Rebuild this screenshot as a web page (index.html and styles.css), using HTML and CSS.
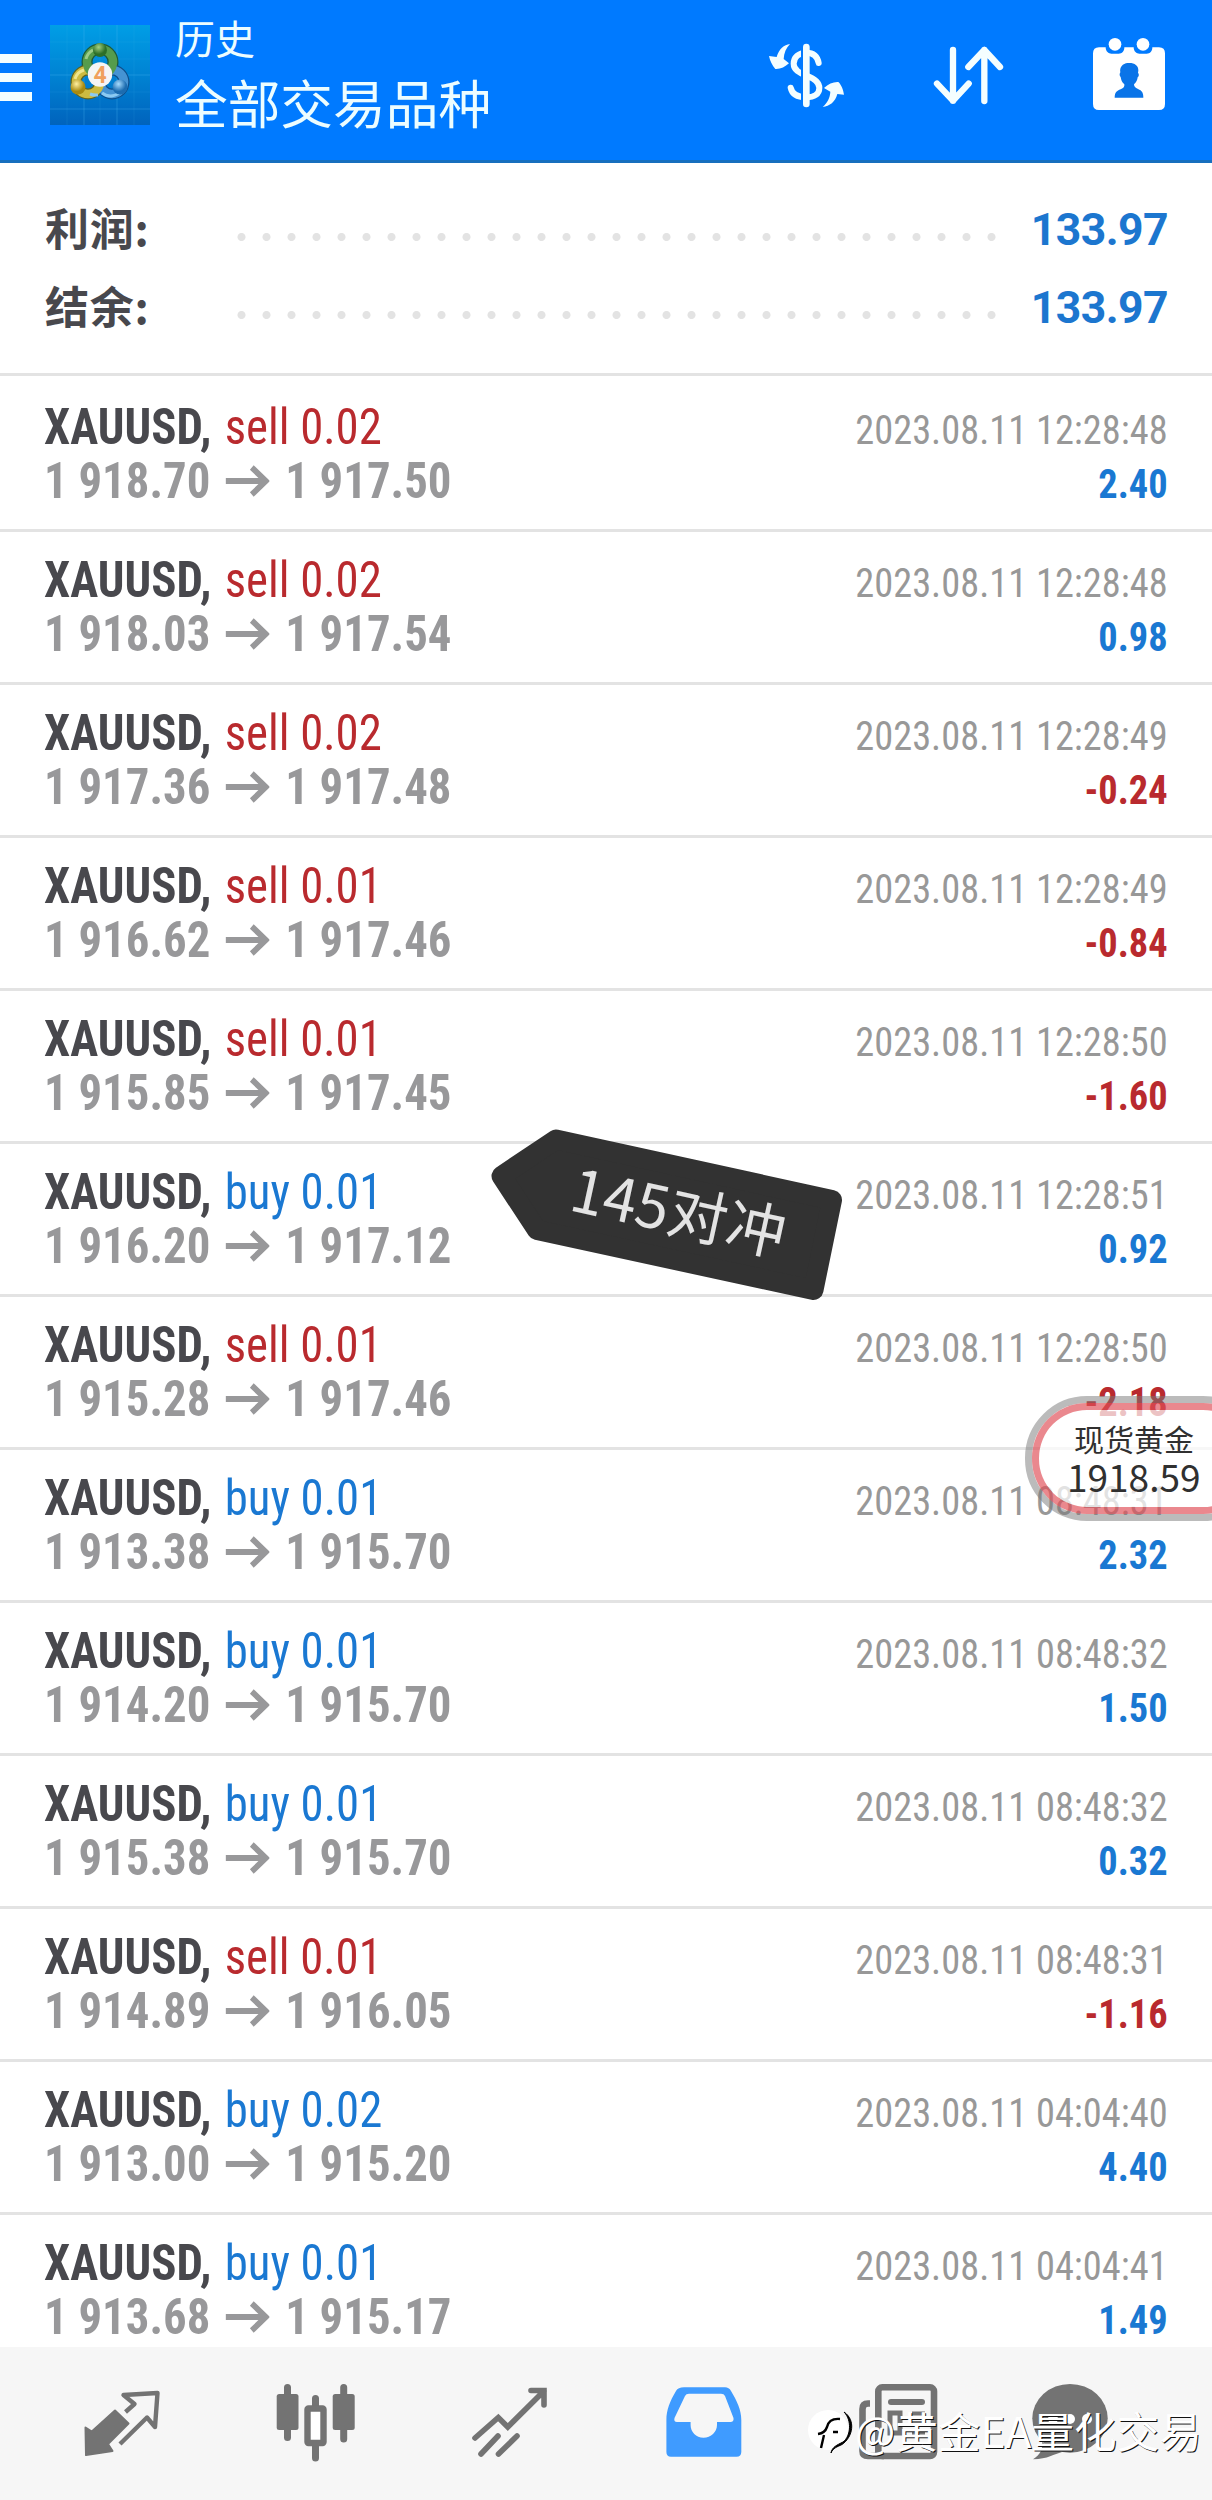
FILE: index.html
```
<!DOCTYPE html>
<html lang="zh-CN">
<head>
<meta charset="utf-8">
<title>历史</title>
<link rel="stylesheet" href="styles.css">
</head>
<body>
<svg class="defs" aria-hidden="true">
  <symbol id="arrow" viewBox="0 0 47 32"><path d="M0 16H43M28 2.5L43 16L28 29.5" fill="none" stroke="currentColor" stroke-width="6"/></symbol>
</svg>
<div class="app">
  <header class="bar">
    <div class="menu"><i></i><i></i><i></i></div>
    <svg class="logo" viewBox="0 0 100 100">
      <defs>
        <linearGradient id="bg" x1="0" y1="0" x2="0" y2="1"><stop offset="0" stop-color="#009ee6"/><stop offset=".5" stop-color="#0083d3"/><stop offset="1" stop-color="#0063bd"/></linearGradient>
        <radialGradient id="gb" cx=".4" cy=".3"><stop offset="0" stop-color="#a4d080"/><stop offset="1" stop-color="#2c6f28"/></radialGradient>
        <radialGradient id="yb" cx=".4" cy=".3"><stop offset="0" stop-color="#fff0a0"/><stop offset="1" stop-color="#a88a10"/></radialGradient>
        <radialGradient id="bb" cx=".4" cy=".3"><stop offset="0" stop-color="#a6dcff"/><stop offset="1" stop-color="#1c6cb0"/></radialGradient>
      </defs>
      <rect width="100" height="100" fill="url(#bg)"/>
      <path d="M34 0V100M67 0V100M0 50H100M0 84H100" stroke="#4cb9ee" stroke-opacity=".4" fill="none" stroke-width=".8"/>
      <path d="M17 0V100M50 0V100M84 0V100M0 17H100M0 34H100M0 67H100" stroke="#4cb9ee" stroke-opacity=".15" fill="none" stroke-width=".8"/>
      <g fill="none">
        <circle cx="50" cy="37" r="13" stroke="#1f5a38" stroke-width="11"/>
        <circle cx="38" cy="57" r="12" stroke="#5f6420" stroke-width="11"/>
        <circle cx="62" cy="57" r="12" stroke="#0d4f8c" stroke-width="11"/>
        <circle cx="62" cy="57" r="12" stroke="#4593d3" stroke-width="8.5"/>
        <circle cx="38" cy="57" r="12" stroke="#cdbb40" stroke-width="8.5"/>
        <circle cx="50" cy="37" r="13" stroke="#559c4c" stroke-width="8.5"/>
        <path d="M40 69a16 14 0 0 0 8 1M52 68a14 14 0 0 0 20-3" stroke="#8ccaf2" stroke-width="3"/>
        <path d="M36 34a14 14 0 0 1 7-9" stroke="#9dcc88" stroke-width="3"/>
        <path d="M25 54a13 13 0 0 1 9-9" stroke="#efe58c" stroke-width="3"/>
      </g>
      <circle cx="50" cy="25" r="7" fill="url(#gb)"/>
      <circle cx="28" cy="62" r="7.5" fill="url(#yb)"/>
      <circle cx="70" cy="62" r="7.5" fill="url(#bb)"/>
      <circle cx="50" cy="49.5" r="12.2" fill="#f5f5f5"/>
      <text x="50" y="57.5" class="logo-num">4</text>
    </svg>
    <div class="titles"><div class="t1">历史</div><div class="t2">全部交易品种</div></div>
    <div class="actions">
      <svg class="i-cash" viewBox="141 120 240 210">
        <g fill="none" stroke="#f4feff" stroke-linecap="round">
          <path d="M259 141V312" stroke-width="20"/>
          <path d="M296 189C292 166 276 158 259 158C236 158 221 172 221 191C221 210 238 219 259 227C284 236 298 246 298 264C298 282 283 292 259 292C234 292 216 283 212 263" stroke-width="18"/>
        </g>
        <path d="M246 150V305" stroke="#007aff" stroke-width="6"/>
        <path d="M272 175V220M272 246V280" stroke="#007aff" stroke-width="4"/>
        <g fill="#f4feff"><path d="M210 132C192 134 177 147 170 171L147 168C150 183 157 197 166 207C181 208 195 201 207 190L191 177C192 159 198 145 210 132Z"/><path d="M308 321C329 318 346 306 352 282L372 284C370 270 364 254 355 246C341 245 325 251 312 264L331 275C330 294 322 308 308 321Z"/></g>
      </svg>
      <svg class="i-sort" viewBox="636 132 219 186"><path d="M699 150V302M651 251L699 302L746 251M793 303V150M745 201L793 150L840 201" fill="none" stroke="#f4feff" stroke-width="19" stroke-linecap="round" stroke-linejoin="round"/></svg>
      <svg class="i-cal" viewBox="1116 108 222 225">
        <path d="M1137 142H1157C1157 155 1166 161 1174 161H1196C1206 161 1213 154 1213 142H1241C1241 155 1250 161 1258 161H1280C1290 161 1297 154 1297 142H1317Q1335 142 1335 160V312Q1335 330 1317 330H1137Q1119 330 1119 312V160Q1119 142 1137 142Z" fill="#fff"/>
        <circle cx="1185" cy="133" r="19" fill="#fff"/><circle cx="1269" cy="133" r="19" fill="#fff"/>
        <path d="M1184 293C1184 278 1190 272 1202 268C1211 264 1214 260 1213 253C1206 247 1203 239 1202 231C1198 228 1198 222 1201 217C1198 201 1208 191 1223 189C1240 187 1256 194 1255 212L1254 218C1258 222 1257 229 1253 232C1252 240 1249 247 1242 253C1242 260 1246 264 1254 267C1266 272 1270 278 1270 293Z" fill="#0a74e8"/>
      </svg>
    </div>
  </header>

  <section class="summary">
    <div class="sum"><b>利润:</b><i class="dots"></i><span>133.97</span></div>
    <div class="sum"><b>结余:</b><i class="dots"></i><span>133.97</span></div>
  </section>

  <main class="list">
    <div class="row first"><div class="l name">XAUUSD, <span class="sell">sell 0.02</span></div><div class="r date">2023.08.11 12:28:48</div><div class="l price">1 918.70<svg><use href="#arrow"/></svg>1 917.50</div><div class="r up">2.40</div></div>
    <div class="row"><div class="l name">XAUUSD, <span class="sell">sell 0.02</span></div><div class="r date">2023.08.11 12:28:48</div><div class="l price">1 918.03<svg><use href="#arrow"/></svg>1 917.54</div><div class="r up">0.98</div></div>
    <div class="row"><div class="l name">XAUUSD, <span class="sell">sell 0.02</span></div><div class="r date">2023.08.11 12:28:49</div><div class="l price">1 917.36<svg><use href="#arrow"/></svg>1 917.48</div><div class="r down">-0.24</div></div>
    <div class="row"><div class="l name">XAUUSD, <span class="sell">sell 0.01</span></div><div class="r date">2023.08.11 12:28:49</div><div class="l price">1 916.62<svg><use href="#arrow"/></svg>1 917.46</div><div class="r down">-0.84</div></div>
    <div class="row"><div class="l name">XAUUSD, <span class="sell">sell 0.01</span></div><div class="r date">2023.08.11 12:28:50</div><div class="l price">1 915.85<svg><use href="#arrow"/></svg>1 917.45</div><div class="r down">-1.60</div></div>
    <div class="row"><div class="l name">XAUUSD, <span class="buy">buy 0.01</span></div><div class="r date">2023.08.11 12:28:51</div><div class="l price">1 916.20<svg><use href="#arrow"/></svg>1 917.12</div><div class="r up">0.92</div></div>
    <div class="row"><div class="l name">XAUUSD, <span class="sell">sell 0.01</span></div><div class="r date">2023.08.11 12:28:50</div><div class="l price">1 915.28<svg><use href="#arrow"/></svg>1 917.46</div><div class="r down">-2.18</div></div>
    <div class="row"><div class="l name">XAUUSD, <span class="buy">buy 0.01</span></div><div class="r date">2023.08.11 08:48:31</div><div class="l price">1 913.38<svg><use href="#arrow"/></svg>1 915.70</div><div class="r up">2.32</div></div>
    <div class="row"><div class="l name">XAUUSD, <span class="buy">buy 0.01</span></div><div class="r date">2023.08.11 08:48:32</div><div class="l price">1 914.20<svg><use href="#arrow"/></svg>1 915.70</div><div class="r up">1.50</div></div>
    <div class="row"><div class="l name">XAUUSD, <span class="buy">buy 0.01</span></div><div class="r date">2023.08.11 08:48:32</div><div class="l price">1 915.38<svg><use href="#arrow"/></svg>1 915.70</div><div class="r up">0.32</div></div>
    <div class="row"><div class="l name">XAUUSD, <span class="sell">sell 0.01</span></div><div class="r date">2023.08.11 08:48:31</div><div class="l price">1 914.89<svg><use href="#arrow"/></svg>1 916.05</div><div class="r down">-1.16</div></div>
    <div class="row"><div class="l name">XAUUSD, <span class="buy">buy 0.02</span></div><div class="r date">2023.08.11 04:04:40</div><div class="l price">1 913.00<svg><use href="#arrow"/></svg>1 915.20</div><div class="r up">4.40</div></div>
    <div class="row"><div class="l name">XAUUSD, <span class="buy">buy 0.01</span></div><div class="r date">2023.08.11 04:04:41</div><div class="l price">1 913.68<svg><use href="#arrow"/></svg>1 915.17</div><div class="r up">1.49</div></div>
  </main>

  <nav class="tabs">
    <svg viewBox="0 17 202 153">
      <path d="M85.5 97.5L91.8 101.5L115 80.5L128.5 93.5L108 114L112.5 121L86 125Z" fill="#737373" stroke="#737373" stroke-width="2" stroke-linejoin="round"/>
      <path d="M125.5 82L134.5 74L123.5 65L157.5 63L155 97L147 87.5L120 114" fill="none" stroke="#737373" stroke-width="4.4" stroke-linejoin="round"/>
    </svg>
    <svg viewBox="202 17 202 153">
      <path d="M287.5 57.5V107.5M315.5 68.5V77M315.5 114V128M343.7 57.5V109" stroke="#737373" stroke-width="7" stroke-linecap="round"/>
      <rect x="276.7" y="64" width="21.8" height="36" rx="2.5" fill="#737373"/><rect x="332.7" y="64" width="22" height="36" rx="2.5" fill="#737373"/>
      <rect x="307.5" y="78.5" width="16" height="34.5" rx="1" fill="#fff" stroke="#737373" stroke-width="6.4"/>
    </svg>
    <svg viewBox="404 17 202 153"><path d="M475 108L498.3 87.5L507.8 97L544 61M531 60.5H544V75M481 124L498 106M498.5 124L517 106" fill="none" stroke="#737373" stroke-width="5.6" stroke-linecap="round"/></svg>
    <svg viewBox="606 17 202 153">
      <path fill-rule="evenodd" fill="#3f9bff" d="M684 57.300H725Q729 57.300 731 61C737 71 741.300 80 741.300 90V122Q741.300 126.700 736.500 126.700H671Q666.400 126.700 666.400 122V90C666.400 80 670 71 676 61Q678 57.300 684 57.300ZM689 63.700Q686 63.700 685 66L674.500 88Q673.500 92 677 92H690.600V95C690.600 102 696 107.700 703.500 107.700C711 107.700 717 102 717 95V92H730.500Q734 92 733.500 88L725 66Q724 63.700 721 63.700Z"/>
    </svg>
    <svg viewBox="808 17 202 153">
      <g fill="none" stroke="#737373"><rect x="878.3" y="57.3" width="55.7" height="68.7" rx="4" stroke-width="6.6"/><path d="M870 73.5H868Q862.5 73.5 862.5 79V121Q862.5 126 868 126H884" stroke-width="6.6"/><path d="M891 72H922" stroke-width="6" stroke-linecap="round"/><path d="M912 83.5H925M912 93H925M912 102.5H925" stroke-width="4"/><rect x="890" y="83" width="10" height="20" stroke-width="5"/></g>
    </svg>
    <svg viewBox="1010 17 202 153">
      <ellipse cx="1070" cy="88.3" rx="37.7" ry="34.4" fill="#737373"/><path d="M1033 129.300C1040 125 1043 119 1042 112L1062 122C1054 124 1048 129 1033 129.300Z" fill="#737373"/>
      <circle cx="1053" cy="89" r="5" fill="#fff"/><circle cx="1070" cy="89" r="5" fill="#fff"/><circle cx="1087" cy="89" r="5" fill="#fff"/>
    </svg>
  </nav>

  <svg class="tag" viewBox="480 1120 370 190">
    <path d="M501.5 1176L556 1139.5L832 1200L813.5 1290L537 1230Z" fill="#323232" stroke="#323232" stroke-width="20" stroke-linejoin="round"/>
    <text transform="translate(567.5 1210) rotate(12.3)">145对冲</text>
  </svg>

  <div class="quote"><div class="quote-in"><div class="q1">现货黄金</div><div class="q2">1918.59</div></div></div>

  <div class="mark">
    <svg viewBox="0 0 50 54">
      <circle cx="24" cy="24" r="20" fill="#fff"/>
      <path d="M40 6C48 14 47 30 39 36C33 39 28 41 27 47C29 42 33 41 38 38.500C49 31 52 14 40 6Z" fill="#000" stroke="#000"/>
      <path d="M36 13Q25 12 23 21Q21 27 14 28M20 29L17 42M29 26H34" fill="none" stroke="#000" stroke-width="2.4"/>
    </svg>
    <span>@黄金EA量化交易</span>
  </div>
</div>
</body>
</html>
```
FILE: styles.css
```
* { box-sizing: border-box; }
body { margin: 0; background: #fff; font-family: Roboto, "Noto Sans CJK SC", sans-serif; }
.defs { display: none; }
.app { position: relative; width: 1212px; height: 2500px; overflow: hidden; display: flex; flex-direction: column; }

.bar { height: 163px; flex: none; display: flex; align-items: flex-start; background: #007aff; border-bottom: 3px solid #176fbe; }
.menu { width: 50px; padding-top: 54px; display: flex; flex-direction: column; gap: 10px; }
.menu i { width: 31.5px; height: 9px; background: #f4feff; }
.logo { width: 100px; height: 100px; margin-top: 25px; }
.logo-num { font: 700 23px Roboto, sans-serif; fill: #f0a05c; text-anchor: middle; }
.titles { margin-left: 25px; color: #ecfdff; font-family: "Noto Sans CJK SC", sans-serif; white-space: nowrap; flex: 1; }
.t1 { font-size: 40px; line-height: 50px; margin-top: 12px; }
.t2 { font-size: 52.7px; line-height: 70px; margin-top: 4px; }
.actions { display: flex; margin-right: 46px; }
.i-cash { width: 80px; height: 70px; margin-top: 40px; }
.i-sort { width: 73px; height: 62px; margin: 44px 0 0 85px; }
.i-cal { width: 74px; height: 75px; margin: 36px 0 0 87px; }

.summary { flex: none; height: 210px; padding: 28px 44px 0 45px; }
.sum { height: 78px; display: flex; align-items: center; }
.sum b { width: 184px; font: 700 44px/78px "Noto Sans CJK SC", sans-serif; color: #48484d; letter-spacing: .8px; margin-top: -7px; }
.dots { width: 775px; height: 8px; margin-top: 14px; background: radial-gradient(circle at 12.5px 4px, #e3e3e3 3.6px, transparent 4.4px) 0 0 / 25px 8px; }
.sum span { flex: 1; text-align: right; font: 700 44.5px/78px Roboto, sans-serif; color: #1c76cf; letter-spacing: -.55px; }

.list { flex: 1; min-height: 0; overflow: hidden; }
.row { height: 153px; padding: 21px 44px 0 44px; border-top: 3px solid #e3e3e3; display: grid; grid-template-columns: 1fr auto; grid-template-rows: 54px 54px; align-items: baseline; align-content: start; font-family: "Roboto Condensed", Roboto, sans-serif; font-stretch: 75%; line-height: 54px; white-space: nowrap; }
.row.first { height: 156px; padding-top: 24px; }
.l { transform: scaleX(.936); transform-origin: left; font-size: 50px; font-weight: 700; }
.r { transform: scaleX(.925); transform-origin: right; font-size: 41.5px; font-weight: 700; text-align: right; }
.name { color: #48484d; }
.name span { font-weight: 450; margin-left: 2.5px; }
.sell, .down { color: #b92a2e; }
.buy, .up { color: #1a78d2; }
.price { color: #98989a; }
.price svg { width: 47px; height: 32px; margin: 0 16.5px; vertical-align: 1px; }
.row .date { font-weight: 430; color: #989898; }

.tabs { flex: none; height: 153px; display: flex; background: #f6f6f6; }
.tabs svg { width: 202px; height: 153px; }

.tag { position: absolute; left: 480px; top: 1120px; width: 370px; height: 190px; }
.tag text { font: 400 59.5px "Noto Sans CJK SC", sans-serif; fill: #e3e3e3; }

.quote { position: absolute; left: 1025px; top: 1396px; width: 240px; height: 125px; border-radius: 62px; border: 7px solid rgba(120, 120, 120, .5); }
.quote-in { height: 111px; border-radius: 55px; border: 7px solid rgba(224, 80, 88, .68); background: rgba(255, 255, 255, .72); background-clip: padding-box; color: #303030; font-family: "Noto Sans CJK SC", sans-serif; padding-left: 28px; white-space: nowrap; }
.q1 { font-size: 30px; line-height: 40px; padding: 8px 0 0 7px; }
.q2 { font-size: 37px; line-height: 36px; }

.mark { position: absolute; left: 804px; top: 2406px; display: flex; align-items: flex-start; }
.mark svg { width: 50px; height: 54px; }
.mark span { font: 400 42.6px/50px "Noto Sans CJK SC", sans-serif; color: #fff; text-shadow: 1px 1px 0 #111; margin: -1px 0 0 1px; white-space: nowrap; }
```
